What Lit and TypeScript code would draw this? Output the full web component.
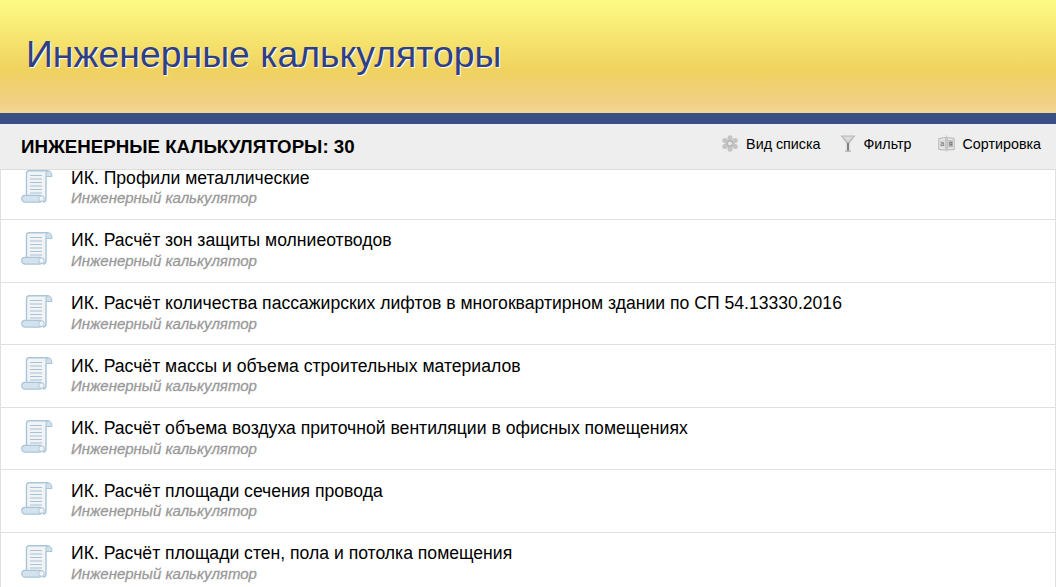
import { LitElement, html, css } from "lit";
import { customElement } from "lit/decorators.js";

const rows = [
  "ИК. Профили металлические",
  "ИК. Расчёт зон защиты молниеотводов",
  "ИК. Расчёт количества пассажирских лифтов в многоквартирном здании по СП 54.13330.2016",
  "ИК. Расчёт массы и объема строительных материалов",
  "ИК. Расчёт объема воздуха приточной вентиляции в офисных помещениях",
  "ИК. Расчёт площади сечения провода",
  "ИК. Расчёт площади стен, пола и потолка помещения",
];

const scroll = html`<svg class="scroll" width="32" height="33" viewBox="0 0 32 33">
  <path d="M5.5 0.7H27C29.5 0.7 31 3 31 6.5H25V29C25 31 24 32 22 32H5.5Z" fill="#f1f3f5"/>
  <path d="M25 6.5V3C25 1.5 26 0.7 27 0.7C29.5 0.7 31 3 31 6.5Z" fill="#cfe0ec" stroke="#a9c5d9" stroke-width="1"/>
  <path d="M5.5 25V3.2C5.5 1.7 6.7 0.7 8 0.7H27M25 6.5V29C25 31 24 32 22 32" fill="none" stroke="#a9c5d9" stroke-width="1.4"/>
  <rect x="0.7" y="25.3" width="21" height="6.8" rx="3.4" fill="#d3e2ed" stroke="#a9c5d9" stroke-width="1.2"/>
  <circle cx="20.5" cy="28.6" r="2.8" fill="#f1f3f5" stroke="#a9c5d9" stroke-width="1"/>
  <path d="M9 5.5H21M9 9H21M9 12.5H21M9 16H21M9 19.5H21M9 23H21" stroke="#a8c2d6" stroke-width="1.2"/>
</svg>`;

const gear = html`<svg width="16" height="17" viewBox="0 0 16 17">
  <g fill="#c4c4c4">
    <circle cx="8" cy="2.8" r="2.5"/><circle cx="8" cy="14.2" r="2.5"/>
    <circle cx="2.8" cy="5.6" r="2.5"/><circle cx="13.2" cy="5.6" r="2.5"/>
    <circle cx="2.8" cy="11.4" r="2.5"/><circle cx="13.2" cy="11.4" r="2.5"/>
    <circle cx="8" cy="8.5" r="5"/>
  </g>
  <circle cx="8" cy="8.5" r="2.6" fill="#e6e6e6" stroke="#a0a0a0" stroke-width=".8"/>
</svg>`;

const funnel = html`<svg width="16" height="17" viewBox="0 0 16 17">
  <path d="M0.5 0.5H15.5L9.3 8.5V15.5H6.7V8.5Z" fill="#b9b9b9"/>
  <path d="M3 1.5H13L8.8 6.5H7.2Z" fill="#dcdcdc"/>
  <rect x="7.2" y="8" width="1.6" height="8" fill="#777"/>
  <rect x="5" y="15.5" width="6" height="1.2" fill="#aaa"/>
</svg>`;

const book = html`<svg width="17" height="17" viewBox="0 0 17 17">
  <path d="M0.8 3.5L7.7 2.5V15L0.8 14.5Z M16.2 3.5L9.3 2.5V15L16.2 14.5Z" fill="#e8e8e8" stroke="#b5b5b5"/>
  <path d="M8.5 0.5V16.5" stroke="#c9c9c9" stroke-width="1.4"/>
  <rect x="2" y="5" width="4.6" height="7.4" fill="#dadada"/>
  <rect x="10.4" y="5" width="4.6" height="7.4" fill="#bdbdbd"/>
  <text class="glyph" x="4.3" y="11" text-anchor="middle">а</text>
  <text class="glyph" x="12.7" y="11" text-anchor="middle">я</text>
</svg>`;

@customElement("app-root")
export class AppRoot extends LitElement {
  static styles = css`
    :host {
      display: block;
      height: 587px;
      overflow: hidden;
      font-family: "Liberation Sans", Arial, sans-serif;
      background: #fff;
    }
    .banner {
      height: 113px;
      box-sizing: border-box;
      padding: 33px 0 0 26px;
      background: linear-gradient(#fdfb84 0%, #f0d25e 62%, #f1d084 90%, #f3d795 100%);
    }
    h1 {
      margin: 0;
      font-size: 37.4px;
      line-height: 42px;
      font-weight: 400;
      color: #2f3f7f;
      text-shadow: 1px 1px 1px #fff;
    }
    .bar {
      height: 11px;
      background: #3b4f87;
    }
    .toolbar {
      height: 45px;
      background: #eee;
      border-bottom: 1px solid #ddd;
      display: flex;
      align-items: center;
      padding: 0 15px 0 21px;
    }
    .count {
      flex: 1;
      font-size: 18.7px;
      font-weight: 700;
      color: #000;
    }
    .tools {
      display: flex;
      gap: 19px;
      font-size: 14.3px;
      color: #000;
      padding-bottom: 6px;
    }
    .tool {
      display: flex;
      align-items: center;
      gap: 8px;
    }
    .tool:last-child {
      margin-left: 7px;
    }
    .glyph {
      font-size: 7px;
      fill: #666;
    }
    .list {
      height: 417px;
      overflow: hidden;
    }
    .row {
      height: 62.6px;
      box-sizing: border-box;
      border: 1px solid #e0e0e0;
      border-width: 0 1px 1px 1px;
      display: flex;
      padding: 10.4px 0 0 20px;
      gap: 18px;
    }
    .row:first-child {
      height: 50px;
      padding-top: 0;
    }
    .row:first-child .name {
      line-height: 16.4px;
      margin-bottom: 2px;
    }
    .row:first-child .scroll {
      margin-top: 0;
    }
    .inner {
      display: flex;
      flex-direction: column;
    }
    .name {
      font-size: 17.6px;
      line-height: 20.6px;
      color: #000;
    }
    .sub {
      font-size: 15px;
      line-height: 20px;
      font-style: italic;
      color: #999;
      -webkit-text-stroke: 0.3px #999;
    }
    .scroll {
      flex: none;
      margin-top: 1.6px;
    }
  `;

  render() {
    return html`
      <div class="banner"><h1>Инженерные калькуляторы</h1></div>
      <div class="bar"></div>
      <div class="toolbar">
        <div class="count">ИНЖЕНЕРНЫЕ КАЛЬКУЛЯТОРЫ: 30</div>
        <div class="tools">
          <div class="tool">${gear}<span>Вид списка</span></div>
          <div class="tool">${funnel}<span>Фильтр</span></div>
          <div class="tool">${book}<span>Сортировка</span></div>
        </div>
      </div>
      <div class="list">
        ${rows.map(
          (r) => html`<div class="row">
            ${scroll}
            <div class="inner">
              <div class="name">${r}</div>
              <div class="sub">Инженерный калькулятор</div>
            </div>
          </div>`
        )}
      </div>
    `;
  }
}
